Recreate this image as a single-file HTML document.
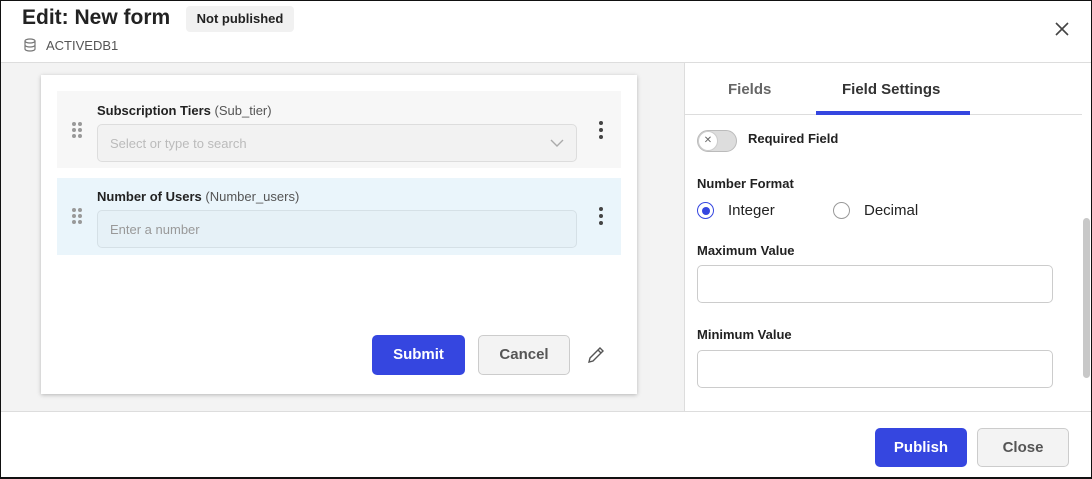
<!DOCTYPE html>
<html><head><style>
*{box-sizing:border-box;margin:0;padding:0}
body{width:1092px;height:479px;font-family:"Liberation Sans",sans-serif;background:#fff;position:relative;overflow:hidden;color:#222}
.frame{position:absolute;left:0;top:0;width:1092px;height:479px;border:1px solid #111;border-bottom-width:2px}
.abs{position:absolute}
.lbl{font-size:13px;font-weight:bold;color:#222}
.lbl span{font-weight:normal;color:#555}
.inp{position:absolute;border:1px solid #ddd;border-radius:5px;font-size:13px;color:#bbb;padding:0 12px;display:flex;align-items:center}
.dots{position:absolute;width:10px;height:16px}
.dots i{position:absolute;width:4px;height:4px;border-radius:50%;background:#999}
.kebab i{position:absolute;width:4px;height:4px;border-radius:50%;background:#444;left:0}
</style></head><body>
<div class="abs" style="left:22px;top:6px;font-size:21px;font-weight:bold">Edit: New form</div>
<div class="abs" style="left:186px;top:6px;width:108px;height:26px;background:#f1f1f1;border-radius:4px;font-size:13px;font-weight:bold;text-align:center;line-height:25px">Not published</div>
<svg class="abs" style="left:24px;top:38px" width="12" height="14" viewBox="0 0 12 14" fill="none" stroke="#777" stroke-width="1.2"><ellipse cx="6" cy="3" rx="5" ry="2"/><path d="M1 3v8c0 1.1 2.2 2 5 2s5-.9 5-2V3M1 7c0 1.1 2.2 2 5 2s5-.9 5-2"/></svg>
<div class="abs" style="left:46px;top:38px;font-size:13px;color:#555">ACTIVEDB1</div>
<svg class="abs" style="left:1055px;top:22px" width="14" height="14" stroke="#444" stroke-width="1.6"><path d="M1 1L13 13M13 1L1 13"/></svg>
<div class="abs" style="left:0;top:62px;width:1092px;height:1px;background:#ddd"></div>
<div class="abs" style="left:0;top:63px;width:684px;height:349px;background:#f3f3f3"></div>
<div class="abs" style="left:684px;top:63px;width:1px;height:349px;background:#ddd"></div>
<div class="abs" style="left:0;top:411px;width:1092px;height:1px;background:#ddd"></div>
<!-- card -->
<div class="abs" style="left:41px;top:75px;width:596px;height:319px;background:#fff;box-shadow:0 1px 4px rgba(0,0,0,.25)"></div>
<div class="abs" style="left:57px;top:91px;width:564px;height:77px;background:#f7f7f7"></div>
<div class="abs" style="left:57px;top:178px;width:564px;height:77px;background:#eaf5fb"></div>
<div class="abs lbl" style="left:97px;top:103px">Subscription Tiers <span>(Sub_tier)</span></div>
<div class="inp" style="left:97px;top:124px;width:480px;height:38px;background:#f2f2f2">Select or type to search</div>
<svg class="abs" style="left:550px;top:139px" width="14" height="8" fill="none" stroke="#aaa" stroke-width="1.4"><path d="M1 1l6 6 6-6"/></svg>
<div class="abs lbl" style="left:97px;top:189px">Number of Users <span>(Number_users)</span></div>
<div class="inp" style="left:97px;top:210px;width:480px;height:38px;background:#e6f1f7;color:#999;border-color:#d5e0e6">Enter a number</div>
<div class="dots" style="left:72px;top:122px"><i style="left:0;top:0"></i><i style="left:6px;top:0"></i><i style="left:0;top:6px"></i><i style="left:6px;top:6px"></i><i style="left:0;top:12px"></i><i style="left:6px;top:12px"></i></div>
<div class="dots" style="left:72px;top:208px"><i style="left:0;top:0"></i><i style="left:6px;top:0"></i><i style="left:0;top:6px"></i><i style="left:6px;top:6px"></i><i style="left:0;top:12px"></i><i style="left:6px;top:12px"></i></div>
<div class="abs kebab" style="left:599px;top:121px;width:4px;height:18px"><i style="top:0"></i><i style="top:7px"></i><i style="top:14px"></i></div>
<div class="abs kebab" style="left:599px;top:207px;width:4px;height:18px"><i style="top:0"></i><i style="top:7px"></i><i style="top:14px"></i></div>
<div class="abs" style="left:372px;top:335px;width:93px;height:40px;background:#3546e0;border-radius:5px;color:#fff;font-size:15px;font-weight:bold;text-align:center;line-height:40px">Submit</div>
<div class="abs" style="left:478px;top:335px;width:92px;height:40px;background:#f3f3f3;border:1px solid #ccc;border-radius:5px;color:#555;font-size:15px;font-weight:bold;text-align:center;line-height:38px">Cancel</div>
<svg class="abs" style="left:586px;top:345px" width="20" height="20" fill="none" stroke="#555" stroke-width="1.4"><path d="M3 17l1-4 10-10 3 3-10 10z M12 5l3 3"/></svg>
<!-- right panel -->
<div class="abs" style="left:728px;top:81px;font-size:15px;font-weight:bold;color:#666">Fields</div>
<div class="abs" style="left:842px;top:81px;font-size:15px;font-weight:bold;color:#333">Field Settings</div>
<div class="abs" style="left:685px;top:114px;width:397px;height:1px;background:#ddd"></div>
<div class="abs" style="left:816px;top:111px;width:154px;height:4px;background:#3546e0"></div>
<div class="abs" style="left:697px;top:130px;width:40px;height:22px;border-radius:11px;background:#ddd;border:1px solid #bbb"></div>
<div class="abs" style="left:698px;top:131px;width:20px;height:20px;border-radius:50%;background:#fff;border:1px solid #ccc;font-size:10px;color:#666;text-align:center;line-height:18px">✕</div>
<div class="abs lbl" style="left:748px;top:131px">Required Field</div>
<div class="abs lbl" style="left:697px;top:176px">Number Format</div>
<div class="abs" style="left:697px;top:202px;width:17px;height:17px;border-radius:50%;border:1.5px solid #3546e0"></div>
<div class="abs" style="left:701.5px;top:206.5px;width:8px;height:8px;border-radius:50%;background:#3546e0"></div>
<div class="abs" style="left:728px;top:202px;font-size:15px">Integer</div>
<div class="abs" style="left:833px;top:202px;width:17px;height:17px;border-radius:50%;border:1px solid #999"></div>
<div class="abs" style="left:864px;top:202px;font-size:15px">Decimal</div>
<div class="abs lbl" style="left:697px;top:243px">Maximum Value</div>
<div class="abs" style="left:697px;top:265px;width:356px;height:38px;border:1px solid #ccc;border-radius:5px"></div>
<div class="abs lbl" style="left:697px;top:327px">Minimum Value</div>
<div class="abs" style="left:697px;top:350px;width:356px;height:38px;border:1px solid #ccc;border-radius:5px"></div>
<div class="abs" style="left:1083px;top:218px;width:7px;height:160px;border-radius:4px;background:#c8c8c8"></div>
<!-- footer -->
<div class="abs" style="left:875px;top:428px;width:92px;height:39px;background:#3546e0;border-radius:5px;color:#fff;font-size:15px;font-weight:bold;text-align:center;line-height:39px">Publish</div>
<div class="abs" style="left:977px;top:428px;width:92px;height:39px;background:#f3f3f3;border:1px solid #ccc;border-radius:5px;color:#555;font-size:15px;font-weight:bold;text-align:center;line-height:37px">Close</div>
<div class="frame"></div>
</body></html>
